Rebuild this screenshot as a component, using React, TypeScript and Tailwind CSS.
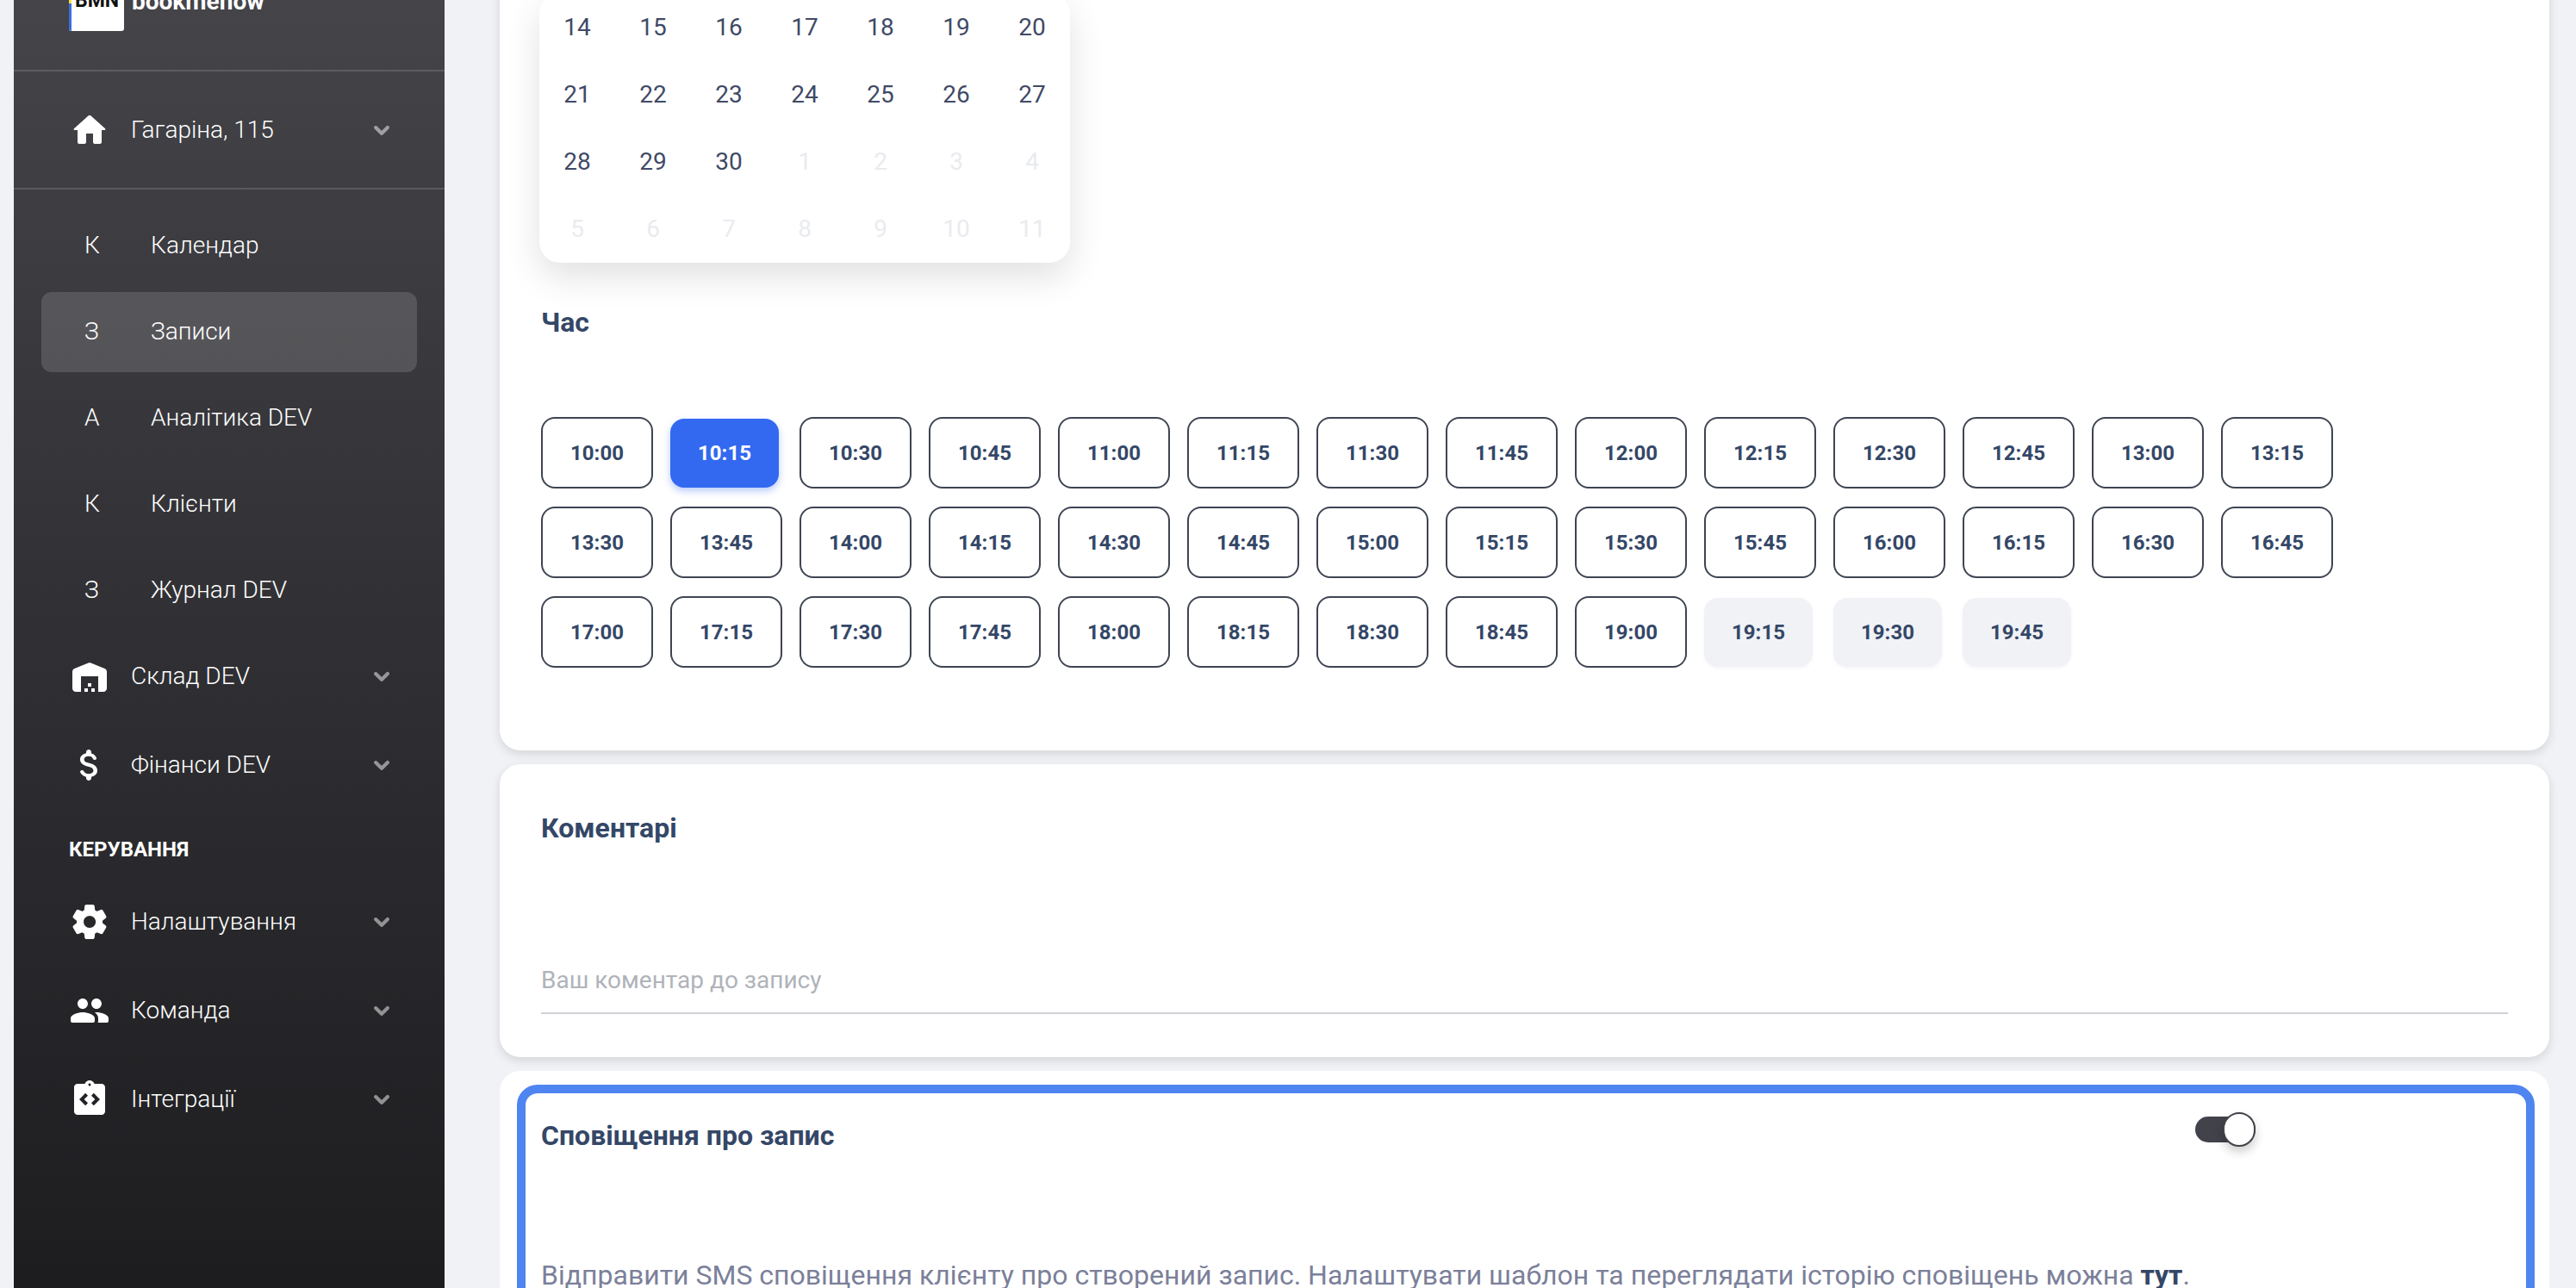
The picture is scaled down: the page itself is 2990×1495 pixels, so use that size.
const font = "font-['Roboto',sans-serif]";

function Icon({ d, className = 'w-[48px] h-[48px]', bold }: { d: string; className?: string; bold?: boolean }) {
  return (
    <svg viewBox="0 0 24 24" fill="currentColor" stroke={bold ? 'currentColor' : 'none'} strokeWidth={bold ? 0.8 : 0} className={`${className} shrink-0`}>
      <path d={d} />
    </svg>
  );
}

const icons = {
  home: 'M10 19v-5h4v5c0 .55.45 1 1 1h3c.55 0 1-.45 1-1v-7h1.7c.46 0 .68-.57.33-.87L12.67 3.6c-.38-.34-.96-.34-1.34 0l-8.36 7.53c-.34.3-.13.87.33.87H5v7c0 .55.45 1 1 1h3c.55 0 1-.45 1-1z',
  warehouse: 'M22 19V9.35c0-.82-.5-1.55-1.26-1.86l-8-3.2c-.48-.19-1.01-.19-1.49 0l-8 3.2C2.5 7.8 2 8.54 2 9.35V19c0 1.1.9 2 2 2h3v-9h10v9h3c1.1 0 2-.9 2-2zm-11 0H9v2h2v-2zm2-3h-2v2h2v-2zm2 3h-2v2h2v-2z',
  money: 'M11.8 10.9c-2.27-.59-3-1.2-3-2.15 0-1.09 1.01-1.85 2.7-1.85 1.42 0 2.13.54 2.39 1.4.12.4.45.7.87.7h.3c.66 0 1.13-.65.9-1.27-.42-1.18-1.4-2.16-2.96-2.54V4.5c0-.83-.67-1.5-1.5-1.5S10 3.67 10 4.5v.66c-1.94.42-3.5 1.68-3.5 3.61 0 2.31 1.91 3.46 4.7 4.13 2.5.6 3 1.48 3 2.41 0 .69-.49 1.79-2.7 1.79-1.65 0-2.5-.59-2.83-1.43-.15-.39-.49-.67-.9-.67h-.28c-.67 0-1.14.68-.89 1.3.57 1.39 1.9 2.21 3.4 2.53v.67c0 .83.67 1.5 1.5 1.5s1.5-.67 1.5-1.5v-.65c1.95-.37 3.5-1.5 3.5-3.55 0-2.84-2.43-3.81-4.7-4.4z',
  settings: 'M19.5 12c0-.23-.01-.45-.03-.68l1.86-1.41c.4-.3.51-.86.26-1.3l-1.87-3.23c-.25-.44-.79-.62-1.25-.42l-2.15.91c-.37-.26-.76-.49-1.17-.68l-.29-2.31c-.06-.5-.49-.88-.99-.88h-3.73c-.51 0-.94.38-1 .88l-.29 2.31c-.41.19-.8.42-1.17.68l-2.15-.91c-.46-.2-1-.02-1.25.42L2.41 8.62c-.25.44-.14.99.26 1.3l1.86 1.41c-.02.22-.03.44-.03.67s.01.45.03.68l-1.86 1.41c-.4.3-.51.86-.26 1.3l1.87 3.23c.25.44.79.62 1.25.42l2.15-.91c.37.26.76.49 1.17.68l.29 2.31c.06.5.49.88.99.88h3.73c.5 0 .93-.38.99-.88l.29-2.31c.41-.19.8-.42 1.17-.68l2.15.91c.46.2 1 .02 1.25-.42l1.87-3.23c.25-.44.14-.99-.26-1.3l-1.86-1.41c.03-.23.04-.45.04-.68zm-7.46 3.5c-1.93 0-3.5-1.57-3.5-3.5s1.57-3.5 3.5-3.5 3.5 1.57 3.5 3.5-1.57 3.5-3.5 3.5z',
  group: 'M16 11c1.66 0 2.99-1.34 2.99-3S17.66 5 16 5s-3 1.34-3 3 1.34 3 3 3zm-8 0c1.66 0 2.99-1.34 2.99-3S9.66 5 8 5 5 6.34 5 8s1.34 3 3 3zm0 2c-2.33 0-7 1.17-7 3.5V18c0 .55.45 1 1 1h12c.55 0 1-.45 1-1v-1.5c0-2.33-4.67-3.5-7-3.5zm8 0c-.29 0-.62.02-.97.05.02.01.03.03.04.04 1.14.83 1.93 1.94 1.93 3.41V18c0 .35-.07.69-.18 1H22c.55 0 1-.45 1-1v-1.5c0-2.33-4.67-3.5-7-3.5z',
  integration: 'M19 3h-4.18C14.4 1.84 13.3 1 12 1s-2.4.84-2.82 2H5c-.14 0-.27.01-.4.04-.39.08-.74.28-1.01.55-.18.18-.33.4-.43.64-.1.23-.16.49-.16.77v14c0 .27.06.54.16.78s.25.45.43.64c.27.27.62.47 1.01.55.13.02.26.03.4.03h14c1.1 0 2-.9 2-2V5c0-1.1-.9-2-2-2zm-8 11.17l-1.41 1.42L6 12l3.59-3.59L11 9.83 8.83 12 11 14.17zm1-9.92c-.41 0-.75-.34-.75-.75s.34-.75.75-.75.75.34.75.75-.34.75-.75.75zm2.41 11.34L13 14.17 15.17 12 13 9.83l1.41-1.42L18 12l-3.59 3.59z',
  chevron: 'M15.88 9.29L12 13.17 8.12 9.29c-.39-.39-1.02-.39-1.41 0-.39.39-.39 1.02 0 1.41l4.59 4.59c.39.39 1.02.39 1.41 0l4.59-4.59c.39-.39.39-1.02 0-1.41-.39-.38-1.03-.39-1.42 0z',
};

function NavGroup({ icon, label, className = 'h-[103px]' }: { icon: string; label: string; className?: string }) {
  return (
    <div className={`flex shrink-0 items-center pl-[64px] pr-[55px] text-white ${className}`}>
      <Icon d={icon} />
      <span className="ml-[24px] flex-1 text-[28px] font-light leading-none">{label}</span>
      <span className="opacity-50">
        <Icon d={icons.chevron} bold className="w-[36px] h-[36px]" />
      </span>
    </div>
  );
}

function NavItem({ letter, label, active }: { letter: string; label: string; active?: boolean }) {
  return (
    <div className={`mx-[32px] flex h-[93px] shrink-0 items-center rounded-[12px] pb-[2px] pl-[50px] text-white ${active ? 'bg-white/[.14]' : ''}`}>
      <span className="w-[77px] text-[28px] font-light leading-none">{letter}</span>
      <span className="text-[28px] font-light leading-none">{label}</span>
    </div>
  );
}

function Sidebar() {
  return (
    <aside className="ml-[16px] flex h-[1495px] w-[500px] shrink-0 flex-col bg-gradient-to-b from-[#444449] to-[#1d1d20]">
      <div className="h-[81px] shrink-0 pl-[64px]">
        <div className="flex -mt-[28px] items-start">
          <div className="relative h-[64px] w-[64px] overflow-hidden rounded-[3px] bg-white">
            <div className="absolute left-0 top-0 h-full w-[3px] bg-[#3b6fe0]" />
            <div className="absolute left-0 top-0 h-[32px] w-[3px] bg-[#f7e34a]" />
            <span className="absolute left-[7px] top-[18px] text-[23px] font-bold leading-[22px] text-[#111]">BMN</span>
          </div>
          <span className="ml-[9px] mt-[16px] text-[28px] font-bold leading-[28px] text-white">bookmenow</span>
        </div>
      </div>
      <div className="h-[2px] shrink-0 bg-white/[.14]" />
      <NavGroup icon={icons.home} label="Гагаріна, 115" className="h-[135px]" />
      <div className="h-[2px] shrink-0 bg-white/[.14]" />
      <div className="mt-[19px] flex shrink-0 flex-col gap-[7px]">
        <NavItem letter="К" label="Календар" />
        <NavItem letter="З" label="Записи" active />
        <NavItem letter="А" label="Аналітика DEV" />
        <NavItem letter="К" label="Клієнти" />
        <NavItem letter="З" label="Журнал DEV" />
      </div>
      <NavGroup icon={icons.warehouse} label="Склад DEV" className="mt-[1px] h-[103px]" />
      <NavGroup icon={icons.money} label="Фінанси DEV" />
      <div className="mt-[23px] mb-[8px] shrink-0 pl-[64px] text-[24px] font-bold uppercase leading-[48px] text-white">Керування</div>
      <NavGroup icon={icons.settings} label="Налаштування" />
      <NavGroup icon={icons.group} label="Команда" />
      <NavGroup icon={icons.integration} label="Інтеграції" />
    </aside>
  );
}

const days = [
  ['14', '15', '16', '17', '18', '19', '20'],
  ['21', '22', '23', '24', '25', '26', '27'],
  ['28', '29', '30', '1', '2', '3', '4'],
  ['5', '6', '7', '8', '9', '10', '11'],
];

function Calendar() {
  return (
    <div className="ml-[-2px] w-[616px] rounded-[24px] bg-white pt-[1px] shadow-[0_16px_40px_rgba(0,0,0,0.12)]">
      {days.map((row, r) => (
        <div key={r} className="grid h-[78px] grid-cols-7">
          {row.map((d, i) => {
            const muted = r === 3 || (r === 2 && i > 2);
            return (
              <div key={d} className={`flex items-center justify-center text-[28px] leading-none ${muted ? 'text-[#e9ebef]' : 'text-[#404a66]'}`}>
                {d}
              </div>
            );
          })}
        </div>
      ))}
    </div>
  );
}

const times = [
  '10:00', '10:15', '10:30', '10:45', '11:00', '11:15', '11:30', '11:45', '12:00', '12:15', '12:30', '12:45', '13:00', '13:15',
  '13:30', '13:45', '14:00', '14:15', '14:30', '14:45', '15:00', '15:15', '15:30', '15:45', '16:00', '16:15', '16:30', '16:45',
  '17:00', '17:15', '17:30', '17:45', '18:00', '18:15', '18:30', '18:45', '19:00', '19:15', '19:30', '19:45',
];

function TimeSlot({ time }: { time: string }) {
  const base = 'flex items-center justify-center text-[24px] font-bold leading-none';
  if (time === '10:15') {
    return <div className={`${base} mt-[2px] h-[80px] w-[126px] rounded-[16px] bg-[#3369f0] text-white shadow-[0_4px_8px_rgba(51,105,240,0.35)]`}>{time}</div>;
  }
  if (time >= '19:15') {
    return <div className={`${base} mt-[2px] h-[80px] w-[126px] rounded-[16px] bg-[#f0f2f5] text-[#344767] shadow-[0_2px_4px_rgba(0,0,0,0.04)]`}>{time}</div>;
  }
  return <div className={`${base} h-[83px] w-[130px] rounded-[16px] border-2 border-[#3e4452] text-[#344767]`}>{time}</div>;
}

const cardClass = 'shrink-0 rounded-[24px] bg-white shadow-[0_4px_12px_rgba(0,0,0,0.12)]';
const titleClass = 'text-[32px] font-bold leading-[48px] text-[#344767]';

export default function App() {
  return (
    <div className={`flex h-[1495px] w-[2990px] overflow-hidden bg-[#f0f2f5] ${font}`}>
      <Sidebar />
      <main className="ml-[64px] mr-[31px] -mt-[40px] flex min-w-0 flex-1 flex-col gap-[16px]">
        <section className={`${cardClass} h-[911px] px-[48px] pt-[32px]`}>
          <Calendar />
          <h2 className={`${titleClass} mt-[45px]`}>Час</h2>
          <div className="mt-[86px] grid grid-cols-[repeat(14,150px)] gap-y-[21px]">
            {times.map((t) => (
              <TimeSlot key={t} time={t} />
            ))}
          </div>
        </section>

        <section className={`${cardClass} h-[340px] px-[48px] pt-[50px]`}>
          <h2 className={titleClass}>Коментарі</h2>
          <div className="mt-[135px] border-b-2 border-[#cfd1d6] pb-[19px] text-[28px] leading-[36px] text-[#b0b3ba]">
            Ваш коментар до запису
          </div>
        </section>

        <section className="shrink-0 rounded-t-[24px] bg-white pl-[20px] pr-[17px] pt-[16px]">
          <div className="h-[400px] rounded-[24px] border-[10px] border-[#4f85f0] pl-[18px]">
            <div className="flex h-[98px] items-center justify-between pr-[314px]">
              <h2 className={titleClass}>Сповіщення про запис</h2>
              <div className="relative -mt-[14px] h-[30px] w-[70px] rounded-full bg-[#42424a]">
                <div className="absolute -top-[5px] right-0 h-[40px] w-[38px] rounded-full border-2 border-[#42424a] bg-white shadow-[0_6px_12px_rgba(0,0,0,0.2)]" />
              </div>
            </div>
            <p className="mt-[89px] text-[32px] leading-[48px] text-[#7b809a]">
              Відправити SMS сповіщення клієнту про створений запис. Налаштувати шаблон та переглядати історію сповіщень можна{' '}
              <b className="font-bold text-[#344767]">тут</b>.
            </p>
          </div>
        </section>
      </main>
    </div>
  );
}
